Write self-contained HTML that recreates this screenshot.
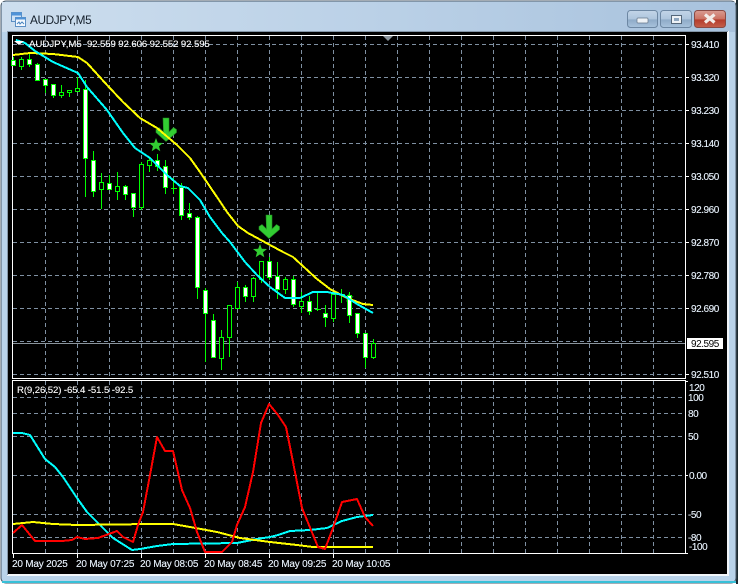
<!DOCTYPE html>
<html><head><meta charset="utf-8"><style>
html,body{margin:0;padding:0;background:#fff;width:738px;height:584px;overflow:hidden}
svg{display:block;position:absolute;left:0;top:0}
text{font-family:"Liberation Sans",sans-serif;font-size:10px;fill:#fff;stroke:#fff;stroke-width:.12px}
.a text{fill:#eaf4ff;stroke:#eaf4ff;letter-spacing:-.45px}
</style></head><body>
<svg width="738" height="584" viewBox="0 0 738 584">
<defs>
<linearGradient id="t" x1="0" y1="0" x2="1" y2="0"><stop offset="0" stop-color="#cddeee"/><stop offset=".5" stop-color="#bbd1e7"/><stop offset="1" stop-color="#a8c2dd"/></linearGradient>
<linearGradient id="b1" x1="0" y1="0" x2="0" y2="1"><stop offset="0" stop-color="#c3d5e8"/><stop offset=".5" stop-color="#aec5dd"/><stop offset=".55" stop-color="#8fabc8"/><stop offset="1" stop-color="#a9c3dd"/></linearGradient>
<linearGradient id="b2" x1="0" y1="0" x2="0" y2="1"><stop offset="0" stop-color="#d99c92"/><stop offset=".5" stop-color="#cb7262"/><stop offset=".55" stop-color="#b43c2c"/><stop offset="1" stop-color="#c45f4b"/></linearGradient>
</defs>
<!-- window -->
<rect x="0" y="0" width="738" height="584" fill="#fff"/>
<rect x="736" y="0" width="2" height="584" fill="#1c2a30"/>
<rect x="1" y="1" width="735" height="582" rx="5" fill="#b9d3ea" stroke="#4a5a68"/>
<rect x="2" y="2" width="733" height="30" fill="url(#t)"/>
<rect x="2" y="581" width="734" height="2" fill="#38c0d8"/>
<rect x="7" y="31" width="722" height="545" fill="#f2f6fa"/>
<rect x="7" y="31" width="721" height="1" fill="#8496a8"/>
<rect x="7" y="31" width="1" height="544" fill="#8496a8"/>
<rect x="8" y="32" width="719" height="542" fill="#000"/>
<!-- title icon -->
<rect x="11.500" y="12.500" width="10" height="9" fill="#cfe2f5" stroke="#5b8fc4"/>
<rect x="11.500" y="12.500" width="10" height="3" fill="#4f93d8"/>
<rect x="15.500" y="17.500" width="10" height="9" fill="#f4f9fe" stroke="#5b8fc4"/>
<rect x="15.500" y="17.500" width="10" height="2" fill="#4f93d8"/>
<path d="M17 24l2-2 1 2 2-2 2 2" fill="none" stroke="#4a86c0"/>
<text x="30" y="24" style="font-size:11.800px;letter-spacing:-.38px;fill:#15202c;stroke:none">AUDJPY,M5</text>
<!-- buttons -->
<rect x="627.500" y="10.500" width="30" height="17" rx="3" fill="url(#b1)" stroke="#6d87a3"/>
<rect x="637" y="18" width="11" height="5" rx="1" fill="#eef2f6" stroke="#66778a" stroke-width=".7"/>
<rect x="660.500" y="10.500" width="31" height="17" rx="3" fill="url(#b1)" stroke="#6d87a3"/>
<rect x="671.500" y="15.500" width="10" height="8" fill="#eef2f6" stroke="#55677a"/>
<rect x="674" y="18" width="5" height="3" fill="#8ea6bf"/>
<rect x="694.500" y="10.500" width="31" height="17" rx="3" fill="url(#b2)" stroke="#8a4a44"/>
<path d="M705 14.500l9.500 8M714.500 14.500l-9.500 8" stroke="#f2ece8" stroke-width="3.200" fill="none"/>

<g shape-rendering="crispEdges">
<!-- grid -->
<g stroke="#7f90a2" stroke-dasharray="4 3" fill="none">
<path d="M13 44.500H685M13 77.500H685M13 110.500H685M13 143.500H685M13 176.500H685M13 209.500H685M13 242.500H685M13 275.500H685M13 308.500H685M13 341.500H685M13 374.500H685"/>
<path d="M13 397.500H685M13 413.500H685M13 436.500H685M13 475.500H685M13 514.500H685M13 537.500H685"/>
<path d="M45.500 36V378M77.500 36V378M109.500 36V378M141.500 36V378M173.500 36V378M205.500 36V378M237.500 36V378M269.500 36V378M301.500 36V378M333.500 36V378M365.500 36V378M397.500 36V378M429.500 36V378M461.500 36V378M493.500 36V378M525.500 36V378M557.500 36V378M589.500 36V378M621.500 36V378M653.500 36V378"/>
<path d="M45.500 381V553M77.500 381V553M109.500 381V553M141.500 381V553M173.500 381V553M205.500 381V553M237.500 381V553M269.500 381V553M301.500 381V553M333.500 381V553M365.500 381V553M397.500 381V553M429.500 381V553M461.500 381V553M493.500 381V553M525.500 381V553M557.500 381V553M589.500 381V553M621.500 381V553M653.500 381V553"/>
</g>
<path d="M13 343.500H685" stroke="#8a949c"/>
<!-- frames -->
<g fill="none" stroke="#fff">
<rect x="12.500" y="35.500" width="673" height="343"/>
<rect x="12.500" y="380.500" width="673" height="173"/>
<path d="M686 44.500h3M686 77.500h3M686 110.500h3M686 143.500h3M686 176.500h3M686 209.500h3M686 242.500h3M686 275.500h3M686 308.500h3M686 374.500h3M686 381.500h2M686 475.500h2M686 553.500h2"/>
<path d="M13.500 554v4M77.500 554v4M141.500 554v4M205.500 554v4M269.500 554v4M333.500 554v4"/>
</g>
</g>
<!-- arrows & stars (behind the moving averages) -->
<path d="M163 118h6v14l4.500-4.500 3 2v3l-10.500 9-10-9v-3l3-2 4.500 4.500z" fill="#32cd32" stroke="#228b22" stroke-width=".6"/>
<path d="M266 215h6v14l4.500-4.500 3 2v3l-10.500 9-10-9v-3l3-2 4.500 4.500z" fill="#32cd32" stroke="#228b22" stroke-width=".6"/>
<path d="M156 138l1.800 4.700 5.200.3-4 3.200 1.300 5-4.300-2.800-4.300 2.800 1.300-5-4-3.200 5.200-.3z" fill="#32cd32"/>
<path d="M260 244l1.800 4.700 5.200.3-4 3.200 1.300 5-4.300-2.800-4.300 2.800 1.300-5-4-3.200 5.200-.3z" fill="#32cd32"/>
<path d="M349 293l1.200 3.200 3.500.2-2.700 2.200.9 3.300-2.900-1.900-2.900 1.900.9-3.300-2.700-2.200 3.500-.2z" fill="#32cd32" opacity=".75"/>
<g shape-rendering="crispEdges">
<!-- wicks -->
<path stroke="#00ff00" fill="none" d="M13.500 57V66M21.500 57V70M29.500 54V67M37.500 63V81M45.500 79V93M53.500 84V98M61.500 85V98M69.500 90V97M77.500 77V92M85.500 80V197M93.500 151V197M101.500 173V209M109.500 175V190M117.500 172V200M125.500 185V200M133.500 193V217M141.500 162V210M149.500 157V172M157.500 154V171M165.500 160V194M173.500 178V194M181.500 183V220M189.500 203V220M197.500 216V299M205.500 288V362M213.500 314V357M221.500 330V370M229.500 305V357M237.500 282V308M245.500 285V302M253.500 277V302M261.500 261V283M269.500 257V280M277.500 262V299M285.500 277V294M293.500 276V307M301.500 292V313M309.500 296V315M317.500 293V311M325.500 305V327M333.500 292V322M341.500 289V303M349.500 292V323M357.500 313V338M365.500 333V368M373.500 339V359"/>
<path stroke="#00ff00" d="M171 188.500h6M315 309.500h6M339 294.500h6M67 91.500h5"/>
<!-- white bodies -->
<g fill="#fff" stroke="#00ff00">
<rect x="11.500" y="60.500" width="4" height="5"/><rect x="27.500" y="59.500" width="4" height="5"/><rect x="35.500" y="64.500" width="4" height="16"/><rect x="43.500" y="79.500" width="4" height="6"/><rect x="51.500" y="84.500" width="4" height="11"/>
<rect x="83.500" y="89.500" width="4" height="69"/><rect x="91.500" y="160.500" width="4" height="31"/><rect x="107.500" y="183.500" width="4" height="6"/><rect x="123.500" y="186.500" width="4" height="8"/><rect x="131.500" y="193.500" width="4" height="14"/>
<rect x="155.500" y="160.500" width="4" height="6"/><rect x="163.500" y="166.500" width="4" height="21"/><rect x="179.500" y="187.500" width="4" height="28"/><rect x="187.500" y="213.500" width="4" height="4"/><rect x="195.500" y="217.500" width="4" height="70"/>
<rect x="203.500" y="290.500" width="4" height="23"/><rect x="211.500" y="320.500" width="4" height="37"/><rect x="243.500" y="287.500" width="4" height="9"/><rect x="267.500" y="261.500" width="4" height="16"/><rect x="275.500" y="276.500" width="4" height="13"/>
<rect x="291.500" y="279.500" width="4" height="25"/><rect x="307.500" y="301.500" width="4" height="10"/><rect x="323.500" y="313.500" width="4" height="4"/><rect x="347.500" y="295.500" width="4" height="20"/><rect x="355.500" y="313.500" width="4" height="20"/><rect x="363.500" y="333.500" width="4" height="24"/>
</g>
<!-- black bodies -->
<g fill="#000" stroke="#00ff00">
<rect x="19.500" y="59.500" width="4" height="7"/><rect x="59.500" y="92.500" width="4" height="3"/><rect x="67.500" y="90.500" width="4" height="2"/><rect x="75.500" y="88.500" width="4" height="3"/><rect x="99.500" y="182.500" width="4" height="7"/><rect x="115.500" y="186.500" width="4" height="5"/><rect x="139.500" y="164.500" width="4" height="43"/><rect x="147.500" y="160.500" width="4" height="5"/>
<rect x="219.500" y="337.500" width="4" height="21"/><rect x="227.500" y="305.500" width="4" height="32"/><rect x="235.500" y="287.500" width="4" height="21"/><rect x="251.500" y="278.500" width="4" height="18"/><rect x="259.500" y="261.500" width="4" height="18"/><rect x="283.500" y="279.500" width="4" height="10"/><rect x="299.500" y="301.500" width="4" height="5"/><rect x="331.500" y="294.500" width="4" height="24"/><rect x="371.500" y="343.500" width="4" height="14"/>
</g>
<!-- MAs -->
<g fill="none" stroke-width="2" stroke-linejoin="round">
<polyline stroke="#ffff00" points="13,55 30,53 53,54 78,57 87,63 107,85 123,102 140,118 157,128 177,145 190,158 200,172 219,200 227,212 238,226 248,233 270,245 283,252 293,257 305,268 317,279 330,289 347,298 363,304 373,305"/>
<polyline stroke="#00ffff" points="16,40 25,43 35,51 53,62 78,73 87,87 107,110 123,133 135,148 150,158 167,175 180,186 188,188 200,200 210,217 222,233 230,242 245,262 257,275 270,287 285,298 300,298 313,292 327,292 343,295 357,304 373,313"/>
<polyline stroke="#00ffff" points="13,433 22,433 30,435 45,459 55,467 63,477 77,498 87,512 100,525 113,538 132,550 140,549 157,546 173,544 237,543 257,539 270,537 278,535 290,531 310,530 327,528 342,521 357,517 373,515"/>
<polyline stroke="#ffff00" points="13,524 33,522 53,524 77,525 150,524 173,524 190,527 217,532 240,538 270,542 297,545 313,547 373,547"/>
<polyline stroke="#ff0000" points="13,533 22,525 35,541 62,541 72,540 77,537 85,539 98,538 117,531 123,537 133,542 138,525 143,512 150,475 157,437 165,451 173,451 182,490 190,508 197,532 205,552 222,552 232,542 237,525 245,507 253,472 261,423 269,404 278,415 286,427 293,462 302,508 318,547 325,549 333,528 342,502 357,499 365,517 373,526"/>
</g>
</g>
<path d="M383 36h10l-5 5z" fill="#8a949c"/>
<path d="M14 41h10l-5 4z" fill="#fff"/>
<!-- labels -->
<text x="29" y="47" style="letter-spacing:.02px;font-size:9.600px">AUDJPY,M5</text>
<text x="87" y="47" style="font-size:9.600px;letter-spacing:-.1px">92.559 92.606 92.552 92.595</text>
<text x="17" y="393" style="font-size:9.600px;letter-spacing:-.1px">R(9,26,52) -65.4 -51.5 -92.5</text>
<g class="a">
<text x="691" y="48">93.410</text><text x="691" y="81">93.320</text><text x="691" y="114">93.230</text><text x="691" y="147">93.140</text><text x="691" y="180">93.050</text><text x="691" y="213">92.960</text><text x="691" y="246">92.870</text><text x="691" y="279">92.780</text><text x="691" y="312">92.690</text><text x="691" y="378">92.510</text>
<text x="689" y="391">120</text><text x="688" y="401">100</text><text x="688" y="417">80</text><text x="688" y="440">50</text><text x="689" y="479">0.00</text><text x="688" y="518">-50</text><text x="688" y="541">-80</text><text x="689" y="550">-100</text>
<text x="12" y="567" style="letter-spacing:-.2px">20 May 2025</text><text x="76" y="567" style="letter-spacing:-.2px">20 May 07:25</text><text x="140" y="567" style="letter-spacing:-.2px">20 May 08:05</text><text x="204" y="567" style="letter-spacing:-.2px">20 May 08:45</text><text x="268" y="567" style="letter-spacing:-.2px">20 May 09:25</text><text x="332" y="567" style="letter-spacing:-.2px">20 May 10:05</text>
</g>
<rect x="687" y="338" width="36" height="11" fill="#fff"/>
<text x="691" y="347" style="fill:#000;stroke:none;letter-spacing:-.45px">92.595</text>
</svg>
</body></html>
